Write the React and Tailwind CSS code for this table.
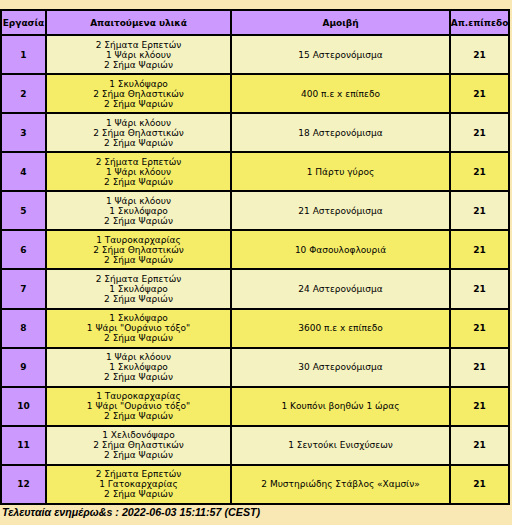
import React from "react";

const rows = [
  [["2 Σήματα Ερπετών", "1 Ψάρι κλόουν", "2 Σήμα Ψαριών"], "15 Αστερονόμισμα"],
  [["1 Σκυλόψαρο", "2 Σήμα Θηλαστικών", "2 Σήμα Ψαριών"], "400 π.ε x επίπεδο"],
  [["1 Ψάρι κλόουν", "2 Σήμα Θηλαστικών", "2 Σήμα Ψαριών"], "18 Αστερονόμισμα"],
  [["2 Σήματα Ερπετών", "1 Ψάρι κλόουν", "2 Σήμα Ψαριών"], "1 Πάρτυ γύρος"],
  [["1 Ψάρι κλόουν", "1 Σκυλόψαρο", "2 Σήμα Ψαριών"], "21 Αστερονόμισμα"],
  [["1 Ταυροκαρχαρίας", "2 Σήμα Θηλαστικών", "2 Σήμα Ψαριών"], "10 Φασουλοφλουριά"],
  [["2 Σήματα Ερπετών", "1 Σκυλόψαρο", "2 Σήμα Ψαριών"], "24 Αστερονόμισμα"],
  [["1 Σκυλόψαρο", "1 Ψάρι \"Ουράνιο τόξο\"", "2 Σήμα Ψαριών"], "3600 π.ε x επίπεδο"],
  [["1 Ψάρι κλόουν", "1 Σκυλόψαρο", "2 Σήμα Ψαριών"], "30 Αστερονόμισμα"],
  [["1 Ταυροκαρχαρίας", "1 Ψάρι \"Ουράνιο τόξο\"", "2 Σήμα Ψαριών"], "1 Κουπόνι βοηθών 1 ώρας"],
  [["1 Χελιδονόψαρο", "2 Σήμα Θηλαστικών", "2 Σήμα Ψαριών"], "1 Σεντούκι Ενισχύσεων"],
  [["2 Σήματα Ερπετών", "1 Γατοκαρχαρίας", "2 Σήμα Ψαριών"], "2 Μυστηριώδης Στάβλος «Χαμσίν»"],
];

export default function App() {
  return (
    <div className="min-h-screen bg-[#f9e7b4] pt-[9px] text-black" style={{ fontFamily: '"DejaVu Sans", sans-serif' }}>
      <div className="grid h-[496px] w-[510px] grid-cols-[43px_183px_217px_57px] grid-rows-[23px_repeat(12,1fr)] gap-[2px] border-2 border-black bg-black text-[9px] leading-[10px]">
        <div className="flex items-center justify-center bg-[#cc99ff] font-bold">Εργασία</div>
        <div className="flex items-center justify-center bg-[#cc99ff] font-bold">Απαιτούμενα υλικά</div>
        <div className="flex items-center justify-center bg-[#cc99ff] font-bold">Αμοιβή</div>
        <div className="flex items-center justify-center bg-[#cc99ff] font-bold">Απ.επίπεδο</div>
        {rows.map(([mats, reward], i) => {
          const bg = i % 2 === 0 ? "bg-[#f4f2c0]" : "bg-[#f5ed68]";
          return (
            <React.Fragment key={i}>
              <div className="flex items-center justify-center bg-[#cc99ff] font-bold">{i + 1}</div>
              <div className={`flex flex-col items-center justify-center ${bg}`}>
                {mats.map((m, j) => (
                  <span key={j}>{m}</span>
                ))}
              </div>
              <div className={`flex items-center justify-center ${bg}`}>{reward}</div>
              <div className={`flex items-center justify-center font-bold ${bg}`}>21</div>
            </React.Fragment>
          );
        })}
      </div>
      <div
        className="mt-[1px] pl-[2px] text-[10.7px] font-bold italic leading-[12px]"
        style={{ fontFamily: '"Liberation Sans", Arial, sans-serif' }}
      >
        Τελευταία ενημέρω&amp;s : 2022-06-03 15:11:57 (CEST)
      </div>
    </div>
  );
}
